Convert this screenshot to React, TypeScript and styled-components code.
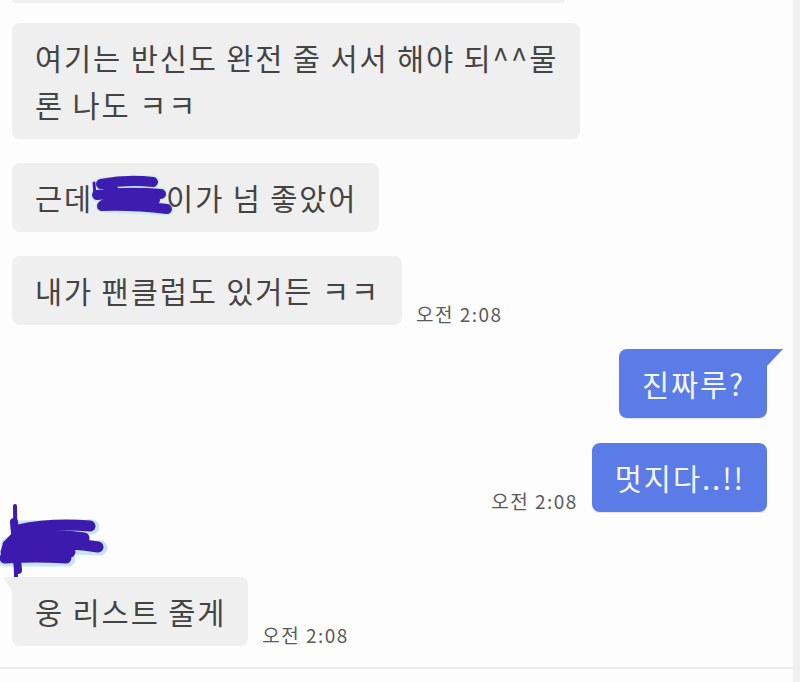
import React from "react";
import styled, { createGlobalStyle, css } from "styled-components";

const Global = createGlobalStyle`
  html, body { margin: 0; padding: 0; background: #fdfdfd; }
  * { box-sizing: border-box; }
`;

const Screen = styled.div`
  width: 800px;
  height: 682px;
  display: flex;
  flex-direction: row;
  background: #fdfdfd;
  overflow: hidden;
  font-family: "Noto Sans CJK KR", "Noto Sans", sans-serif;
`;

const ChatPane = styled.div`
  flex: 1;
  display: flex;
  flex-direction: column;
  padding-bottom: 13px;
`;

const MessageList = styled.div`
  display: flex;
  flex-direction: column;
  padding: 0 26px 0 12px;
`;

const ScrollTrack = styled.div`
  width: 7px;
  background: #f0f0f1;
`;

const Divider = styled.div`
  margin-top: auto;
  height: 2px;
  background: #ebebeb;
`;

const CutBubble = styled.div`
  width: 553px;
  height: 3px;
  background: #f0f0f0;
  border-radius: 0 0 6px 6px;
`;

const Row = styled.div<{ $side: "left" | "right"; $gap: number }>`
  display: flex;
  align-items: flex-end;
  gap: 14px;
  margin-top: ${(p) => p.$gap}px;
  justify-content: ${(p) => (p.$side === "left" ? "flex-start" : "flex-end")};
`;

const Bubble = styled.div<{ $mine?: boolean; $tail?: boolean }>`
  position: relative;
  padding: 11px 22px 11px 23px;
  font-size: 29.5px;
  line-height: 47px;
  letter-spacing: 1.9px;
  white-space: nowrap;
  border-radius: 8px;
  ${(p) =>
    p.$mine
      ? css`
          background: #5b7be6;
          color: #f3f6ff;
          border-top-right-radius: ${p.$tail ? 0 : 8}px;
          box-shadow: 0 1px 1px rgba(40, 50, 100, 0.12);
          ${p.$tail &&
          css`
            &::after {
              content: "";
              position: absolute;
              left: 100%;
              top: 0;
              width: 0;
              height: 0;
              border-top: 17px solid #5b7be6;
              border-right: 16px solid transparent;
            }
          `}
        `
      : css`
          background: #efefef;
          color: #444444;
          border-top-left-radius: ${p.$tail ? 0 : 8}px;
          ${p.$tail &&
          css`
            &::before {
              content: "";
              position: absolute;
              right: 100%;
              top: 0;
              width: 0;
              height: 0;
              border-top: 14px solid #efefef;
              border-left: 9px solid transparent;
            }
          `}
        `}
`;

const Time = styled.span`
  font-size: 19px;
  line-height: 22px;
  color: #5a5a5a;
  white-space: nowrap;
  letter-spacing: 1.5px;
`;

const Redact = styled.span`
  display: inline-block;
  width: 73px;
  height: 47px;
  vertical-align: top;
`;

const NameRow = styled.div`
  height: 65px;
  margin-left: -12px;
  display: flex;
  align-items: flex-start;
`;

const InlineScribble = () => (
  <Redact>
    <svg width="73" height="47" viewBox="0 0 73 47" style={{ overflow: "visible" }}>
      <g fill="none" strokeLinecap="round" strokeLinejoin="round">
        <path d="M8 10 L60 8 M4 21 L68 20 M9 32 L74 35" stroke="#cde8f8" strokeWidth="13" />
        <path d="M8 10 Q34 5 60 8 M4 21 Q36 17 68 20 M9 32 Q40 31 74 35 M14 12 Q34 22 10 31 M20 25 Q45 28 62 26" stroke="#3d1cb0" strokeWidth="10" />
        <path d="M1 9 L2 22" stroke="#3d1cb0" strokeWidth="3" />
      </g>
    </svg>
  </Redact>
);

const NameScribble = () => (
  <svg width="110" height="65" viewBox="0 0 110 65" style={{ overflow: "visible" }}>
    <g fill="none" strokeLinecap="round" strokeLinejoin="round">
      <path d="M18 16 L92 15 M8 33 L100 36 M5 47 L68 47" stroke="#c6e5f6" strokeWidth="15" />
      <path d="M18 18 Q50 11 90 14 M8 33 Q55 28 98 35 M5 46 Q35 44 66 46 M20 22 Q8 30 6 40 M22 26 Q60 22 84 26 M10 40 Q40 38 70 40" stroke="#3b1aad" strokeWidth="11" />
      <path d="M15 -6 L16 66" stroke="#3b1aad" strokeWidth="4" />
      <path d="M14 10 L18 58" stroke="#3b1aad" strokeWidth="8" />
    </g>
  </svg>
);

export default function App() {
  return (
    <>
      <Global />
      <Screen>
        <ChatPane>
          <MessageList>
            <CutBubble />
            <Row $side="left" $gap={20}>
              <Bubble>
                여기는 반신도 완전 줄 서서 해야 되^^물
                <br />론 나도 ㅋㅋ
              </Bubble>
            </Row>
            <Row $side="left" $gap={24}>
              <Bubble>
                근데
                <InlineScribble />
                이가 넘 좋았어
              </Bubble>
            </Row>
            <Row $side="left" $gap={24}>
              <Bubble>내가 팬클럽도 있거든 ㅋㅋ</Bubble>
              <Time>오전 2:08</Time>
            </Row>
            <Row $side="right" $gap={24}>
              <Bubble $mine $tail>
                진짜루?
              </Bubble>
            </Row>
            <Row $side="right" $gap={25}>
              <Time>오전 2:08</Time>
              <Bubble $mine>멋지다..!!</Bubble>
            </Row>
            <NameRow>
              <NameScribble />
            </NameRow>
            <Row $side="left" $gap={0}>
              <Bubble $tail>웅 리스트 줄게</Bubble>
              <Time>오전 2:08</Time>
            </Row>
          </MessageList>
          <Divider />
        </ChatPane>
        <ScrollTrack />
      </Screen>
    </>
  );
}
